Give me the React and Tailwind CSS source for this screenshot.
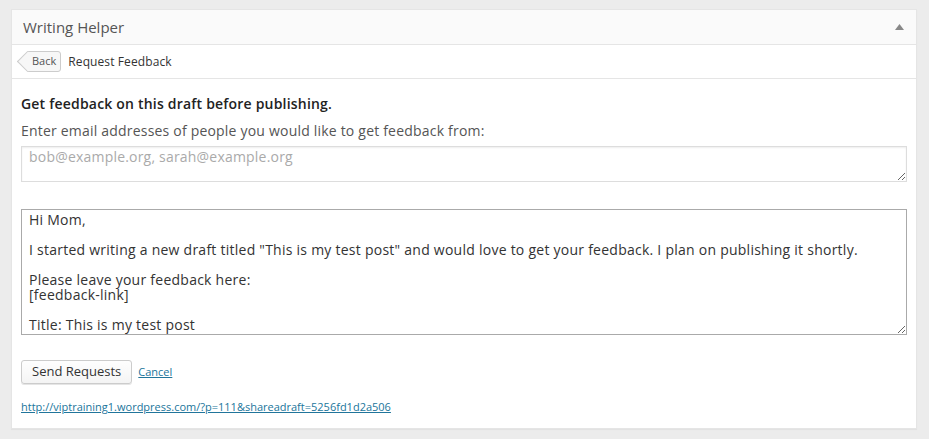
export default function App() {
  const message = `Hi Mom,

I started writing a new draft titled "This is my test post" and would love to get your feedback. I plan on publishing it shortly.

Please leave your feedback here:
[feedback-link]

Title: This is my test post`;

  return (
    <div
      className="w-[929px] h-[439px] bg-[#ececec] pt-[9px] pl-[11px] overflow-hidden"
      style={{ fontFamily: '"Open Sans", sans-serif' }}
    >
      <div className="w-[906px] h-[420px] bg-white border border-[#e5e5e5] shadow-[0_1px_1px_rgba(0,0,0,0.04)] flex flex-col">
        {/* header */}
        <div className="h-[35px] bg-[#fafafa] border-b border-[#e5e5e5] flex items-center justify-between pl-[11px] pr-[12px]">
          <span className="text-[15px] text-[#555] leading-none">Writing Helper</span>
          <svg width="9" height="6" viewBox="0 0 9 6">
            <polygon points="4.5,0 9,6 0,6" fill="#888" />
          </svg>
        </div>

        {/* nav */}
        <div className="h-[34px] border-b border-[#e5e5e5] flex items-center pl-[15px] gap-[7px]">
          <div className="relative flex items-center h-[21px] pl-[4px] pr-[4px] border border-[#ccc] rounded-r-[3px] bg-[#f7f7f7] text-[11px] text-[#555]">
            <span className="absolute left-[-8px] top-[2px] w-[15px] h-[15px] bg-[#f7f7f7] border-l border-b border-[#ccc] rotate-45" />
            <span className="relative">Back</span>
          </div>
          <span className="text-[12px] text-[#333] tracking-[0.1px]">Request Feedback</span>
        </div>

        {/* body */}
        <div className="px-[9px] pt-[15px] flex flex-col">
          <p className="text-[14px] font-semibold text-[#222] leading-[19px] tracking-[0.2px]">
            Get feedback on this draft before publishing.
          </p>
          <p className="text-[14px] text-[#555] leading-[19px] mt-[8px] tracking-[0.2px]">
            Enter email addresses of people you would like to get feedback from:
          </p>
          <textarea
            className="mt-[6px] w-[886px] h-[36px] border border-[#ddd] px-[7px] py-[1px] text-[14px] leading-[18px] tracking-[0.2px] text-[#333] placeholder:text-[#aaa] outline-none shadow-[inset_0_1px_2px_rgba(0,0,0,0.07)]"
            placeholder="bob@example.org, sarah@example.org"
            style={{ fontFamily: '"Open Sans", sans-serif' }}
          />
          <textarea
            className="mt-[27px] w-[886px] h-[126px] border border-[#aaa] px-[7px] py-[2px] text-[14px] leading-[15px] tracking-[0.25px] text-[#333] outline-none overflow-hidden"
            defaultValue={message}
            style={{ fontFamily: '"Open Sans", sans-serif' }}
          />
          <div className="mt-[25px] flex items-center gap-[6px]">
            <button className="h-[24px] px-[10px] border border-[#ccc] rounded-[3px] bg-gradient-to-b from-[#fefefe] to-[#f4f4f4] text-[13px] text-[#333] shadow-[0_1px_0_#e5e5e5]">
              Send Requests
            </button>
            <a href="#" className="text-[11px] text-[#21759b] underline">
              Cancel
            </a>
          </div>
          <a href="#" className="mt-[15px] text-[11px] text-[#21759b] underline self-start">
            http://viptraining1.wordpress.com/?p=111&amp;shareadraft=5256fd1d2a506
          </a>
        </div>
      </div>
    </div>
  );
}
